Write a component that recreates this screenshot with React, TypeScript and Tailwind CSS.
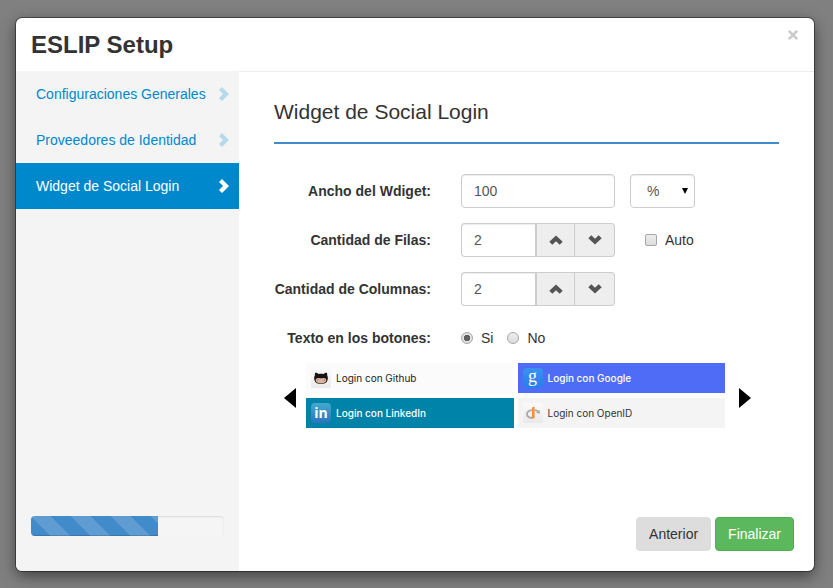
import { useState } from "react";
import type { ReactNode } from "react";

function ChevronRight({ className }: { className: string }) {
  return (
    <svg viewBox="0 0 10 14" className={`h-3.5 w-2.5 shrink-0 ${className}`} fill="currentColor" aria-hidden="true">
      <path d="M0 3 L3 0 L10 7 L3 14 L0 11 L4 7 Z" />
    </svg>
  );
}

function ChevronVertical({ down = false }: { down?: boolean }) {
  return (
    <svg viewBox="0 0 14 10" className="h-2.5 w-3.5" fill="#555555" aria-hidden="true">
      <path
        d={
          down
            ? "M0.3 3.2 L3.3 0.3 L7 3.8 L10.7 0.3 L13.7 3.2 L7 9.6 Z"
            : "M0.3 6.8 L7 0.4 L13.7 6.8 L10.7 9.7 L7 6.2 L3.3 9.7 Z"
        }
      />
    </svg>
  );
}

function GithubIcon() {
  return (
    <svg viewBox="0 0 20 20" className="size-5 shrink-0" aria-hidden="true">
      <defs>
        <linearGradient id="githubTile" x1="0" y1="0" x2="0" y2="1">
          <stop offset="0" stopColor="#fafafa" />
          <stop offset="1" stopColor="#eaeaea" />
        </linearGradient>
      </defs>
      <rect width="20" height="20" rx="2" fill="url(#githubTile)" />
      <path
        d="M4.2 4.8 C5.2 4.6 6.6 5.2 7.5 5.9 C9 5.6 11 5.6 12.6 5.9 C13.5 5.1 15 4.6 15.9 4.8 C16.3 5.8 16.3 6.8 16.2 7.4 C17 8.6 17 10.6 16.4 12.4 C15.5 15 13 15.8 10 15.8 C7 15.8 4.5 15 3.6 12.4 C3 10.6 3 8.6 3.9 7.4 C3.8 6.6 3.8 5.6 4.2 4.8 Z"
        fill="#171312"
      />
      <path
        d="M6.1 10.2 C7.8 9.8 8.8 10.3 10 10.3 C11.2 10.3 12.2 9.8 13.9 10.2 C15.6 10.7 15.7 12.5 14.7 13.7 C13.6 14.9 11.8 15.2 10 15.2 C8.2 15.2 6.4 14.9 5.3 13.7 C4.3 12.5 4.4 10.7 6.1 10.2 Z"
        fill="#dcb4a2"
      />
      <ellipse cx="6.8" cy="12" rx="0.7" ry="1.1" fill="#b98473" />
      <ellipse cx="13.2" cy="12" rx="0.7" ry="1.1" fill="#b98473" />
    </svg>
  );
}

function LetterTile({ children, className }: { children: ReactNode; className: string }) {
  return (
    <span
      aria-hidden="true"
      className={`flex size-5 shrink-0 items-center justify-center rounded-sm bg-linear-to-b text-white ${className}`}
    >
      {children}
    </span>
  );
}

function OpenIdIcon() {
  return (
    <svg viewBox="0 0 20 20" className="size-5 shrink-0" aria-hidden="true">
      <defs>
        <linearGradient id="openidTile" x1="0" y1="0" x2="0" y2="1">
          <stop offset="0" stopColor="#fafafa" />
          <stop offset="1" stopColor="#e9e9e9" />
        </linearGradient>
      </defs>
      <rect width="20" height="20" rx="2" fill="url(#openidTile)" />
      <path
        d="M9.3 7.2 C6 7.4 4 9 4 11.2 C4 13.3 6 14.7 9.3 15"
        fill="none"
        stroke="#a9a9a9"
        strokeWidth="1.8"
      />
      <path d="M11.6 7.2 C13.2 7.3 14.4 7.8 15.3 8.5" fill="none" stroke="#a9a9a9" strokeWidth="1.8" />
      <path d="M12.9 10 L17 10.6 L16.6 7 Z" fill="#a9a9a9" />
      <path d="M9 4.4 L11.6 3.4 V15 L9 16 Z" fill="#f5913e" />
    </svg>
  );
}

const steps = ["Configuraciones Generales", "Proveedores de Identidad", "Widget de Social Login"];

const providers = [
  { name: "Github", style: "bg-[#fbfbfb] text-[#222222]", icon: <GithubIcon /> },
  {
    name: "Google",
    style: "bg-[#4f6cf7] font-medium text-white",
    icon: (
      <LetterTile className="from-[#3a92f0] to-[#2a7cec] pb-1 font-['Liberation_Serif',serif] text-lg leading-4 font-normal">
        g
      </LetterTile>
    ),
  },
  {
    name: "LinkedIn",
    style: "bg-[#0083a8] font-medium text-white",
    icon: (
      <LetterTile className="from-[#43aace] to-[#2a74bd] font-['Open_Sans',sans-serif] text-sm leading-4 font-bold">
        in
      </LetterTile>
    ),
  },
  { name: "OpenID", style: "bg-[#f4f4f4] text-[#333333]", icon: <OpenIdIcon /> },
];

const fieldStyle =
  "h-[34px] border border-[#cccccc] bg-white px-3 text-sm text-[#555555] shadow-[inset_0_1px_1px_rgba(0,0,0,0.075)] outline-none focus:border-[#66afe9]";

const choiceStyle =
  "size-3 appearance-none border border-[#a6a6a6] bg-linear-to-b from-[#eeeeee] to-[#dcdcdc]";

const stepButtonStyle = "flex h-[34px] items-center justify-center border-y border-r border-[#cccccc] bg-[#eeeeee]";

function Row({ label, htmlFor, children }: { label: string; htmlFor: string; children: ReactNode }) {
  return (
    <div className="flex h-[34px] items-center gap-[30px]">
      <label htmlFor={htmlFor} className="w-[171px] shrink-0 text-right font-bold whitespace-nowrap">
        {label}
      </label>
      {children}
    </div>
  );
}

function Stepper({ id, value, onChange }: { id: string; value: number; onChange: (value: number) => void }) {
  return (
    <div className="flex">
      <input
        id={id}
        type="text"
        value={value}
        onChange={(e) => onChange(Number(e.target.value) || 0)}
        className={`${fieldStyle} w-[74px] rounded-l border-r-0`}
      />
      <button
        type="button"
        aria-label="Aumentar"
        onClick={() => onChange(value + 1)}
        className={`${stepButtonStyle} w-10 border-l-2`}
      >
        <ChevronVertical />
      </button>
      <button
        type="button"
        aria-label="Disminuir"
        onClick={() => onChange(Math.max(1, value - 1))}
        className={`${stepButtonStyle} w-10 rounded-r`}
      >
        <ChevronVertical down />
      </button>
    </div>
  );
}

export default function App() {
  const [width, setWidth] = useState("100");
  const [rows, setRows] = useState(2);
  const [columns, setColumns] = useState(2);
  const [showText, setShowText] = useState(true);

  return (
    <div className="flex min-h-screen flex-col bg-[#808080] pt-[18px] pr-[19px] pb-[17px] pl-4 font-['Liberation_Sans',Arial,sans-serif] text-sm leading-5 text-[#333333]">
      <main className="flex flex-1 flex-col overflow-hidden rounded-md bg-white shadow-[0_0_0_1px_rgba(0,0,0,0.4),0_5px_15px_rgba(0,0,0,0.5)]">
        <header className="flex h-[53px] items-start justify-between px-[15px]">
          <h1 className="pt-3 text-2xl leading-[30px] font-bold">ESLIP Setup</h1>
          <button type="button" aria-label="Cerrar" className="mt-3 text-[#cccccc]">
            <svg viewBox="0 0 12 10" className="h-2.5 w-3" stroke="currentColor" strokeWidth="2.6" aria-hidden="true">
              <path d="M1.8 0.8 L10.2 9.2 M10.2 0.8 L1.8 9.2" />
            </svg>
          </button>
        </header>

        <div className="flex flex-1">
          <aside className="flex w-[223px] shrink-0 flex-col justify-between bg-[#f4f4f4]">
            <nav>
              {steps.map((step, i) => (
                <a
                  key={step}
                  href="#"
                  aria-current={i === 2 ? "step" : undefined}
                  className={`flex h-[46px] items-center justify-between pr-2.5 pl-5 whitespace-nowrap ${
                    i === 2 ? "bg-[#0088cc] text-white" : "text-[#0088cc]"
                  }`}
                >
                  {step}
                  <ChevronRight className={i === 2 ? "text-white" : "text-[#b5daec]"} />
                </a>
              ))}
            </nav>
            <div
              role="progressbar"
              aria-label="Progreso"
              aria-valuenow={66}
              aria-valuemin={0}
              aria-valuemax={100}
              className="mx-[15px] mb-[35px] h-5 overflow-hidden rounded bg-[#f5f5f5] shadow-[inset_0_1px_2px_rgba(0,0,0,0.1)]"
            >
              <div className="h-full w-[66%] bg-[#428bca] bg-[linear-gradient(45deg,rgba(255,255,255,0.15)_25%,transparent_25%,transparent_50%,rgba(255,255,255,0.15)_50%,rgba(255,255,255,0.15)_75%,transparent_75%,transparent)] bg-size-[40px_40px] shadow-[inset_0_-1px_0_rgba(0,0,0,0.15)]" />
            </div>
          </aside>

          <section className="flex flex-1 flex-col border-t border-[#eeeeee]">
            <h2 className="mx-[35px] border-b-2 border-[#428bca] pt-[25px] pb-[15px] text-[21px] leading-[30px]">
              Widget de Social Login
            </h2>

            <form className="mt-[30px] flex flex-col gap-[15px] pl-[21px]" onSubmit={(e) => e.preventDefault()}>
              <Row label="Ancho del Wdiget:" htmlFor="width">
                <div className="flex gap-[15px]">
                  <input
                    id="width"
                    type="text"
                    value={width}
                    onChange={(e) => setWidth(e.target.value)}
                    className={`${fieldStyle} w-[154px] rounded`}
                  />
                  <div className="relative">
                    <select
                      aria-label="Unidad"
                      className="h-[34px] w-[65px] appearance-none rounded border border-[#cccccc] bg-white pl-4 text-sm text-[#555555] shadow-[inset_0_1px_1px_rgba(0,0,0,0.075)] outline-none"
                    >
                      <option>%</option>
                      <option>px</option>
                    </select>
                    <svg
                      viewBox="0 0 6 6"
                      className="pointer-events-none absolute top-3.5 right-[7px] size-1.5"
                      fill="#000000"
                      aria-hidden="true"
                    >
                      <path d="M0 0 H6 L3 6 Z" />
                    </svg>
                  </div>
                </div>
              </Row>

              <Row label="Cantidad de Filas:" htmlFor="rows">
                <Stepper id="rows" value={rows} onChange={setRows} />
                <label className="flex items-center gap-2">
                  <input type="checkbox" className={`${choiceStyle} rounded-xs checked:bg-[#777777]`} />
                  Auto
                </label>
              </Row>

              <Row label="Cantidad de Columnas:" htmlFor="columns">
                <Stepper id="columns" value={columns} onChange={setColumns} />
              </Row>

              <Row label="Texto en los botones:" htmlFor="text-yes">
                <div className="flex gap-3.5">
                  <label className="flex items-center gap-2">
                    <input
                      id="text-yes"
                      type="radio"
                      name="text"
                      checked={showText}
                      onChange={() => setShowText(true)}
                      className={`${choiceStyle} rounded-full checked:bg-[radial-gradient(circle,#606060_0_3px,#e2e2e2_3px)]`}
                    />
                    Si
                  </label>
                  <label className="flex items-center gap-2">
                    <input
                      type="radio"
                      name="text"
                      checked={!showText}
                      onChange={() => setShowText(false)}
                      className={`${choiceStyle} rounded-full checked:bg-[radial-gradient(circle,#606060_0_3px,#e2e2e2_3px)]`}
                    />
                    No
                  </label>
                </div>
              </Row>
            </form>

            <div className="mt-2 flex items-center gap-2.5 pr-[63px] pl-[45px]">
              <button type="button" aria-label="Anteriores" className="pt-1">
                <svg viewBox="0 0 12 20" className="h-5 w-3" aria-hidden="true">
                  <path d="M12 0 V20 L0 10 Z" />
                </svg>
              </button>
              <div className="grid flex-1 grid-cols-2 gap-x-1 gap-y-[5px]">
                {providers.map((p) => (
                  <button
                    key={p.name}
                    type="button"
                    className={`flex h-[30px] items-center gap-[5px] pl-[5px] font-['Inter',Verdana,sans-serif] text-[10px] whitespace-nowrap ${p.style}`}
                  >
                    {p.icon}
                    {showText && <span>Login con {p.name}</span>}
                  </button>
                ))}
              </div>
              <button type="button" aria-label="Siguientes" className="ml-1 pt-1">
                <svg viewBox="0 0 12 20" className="h-5 w-3" aria-hidden="true">
                  <path d="M0 0 V20 L12 10 Z" />
                </svg>
              </button>
            </div>

            <footer className="mt-auto flex justify-end gap-1 p-5">
              <button type="button" className="h-[34px] rounded border border-[#dddddd] bg-[#dddddd] px-3">
                Anterior
              </button>
              <button
                type="button"
                className="h-[34px] rounded border border-[#4cae4c] bg-[#5cb85c] px-3 text-white"
              >
                Finalizar
              </button>
            </footer>
          </section>
        </div>
      </main>
    </div>
  );
}
